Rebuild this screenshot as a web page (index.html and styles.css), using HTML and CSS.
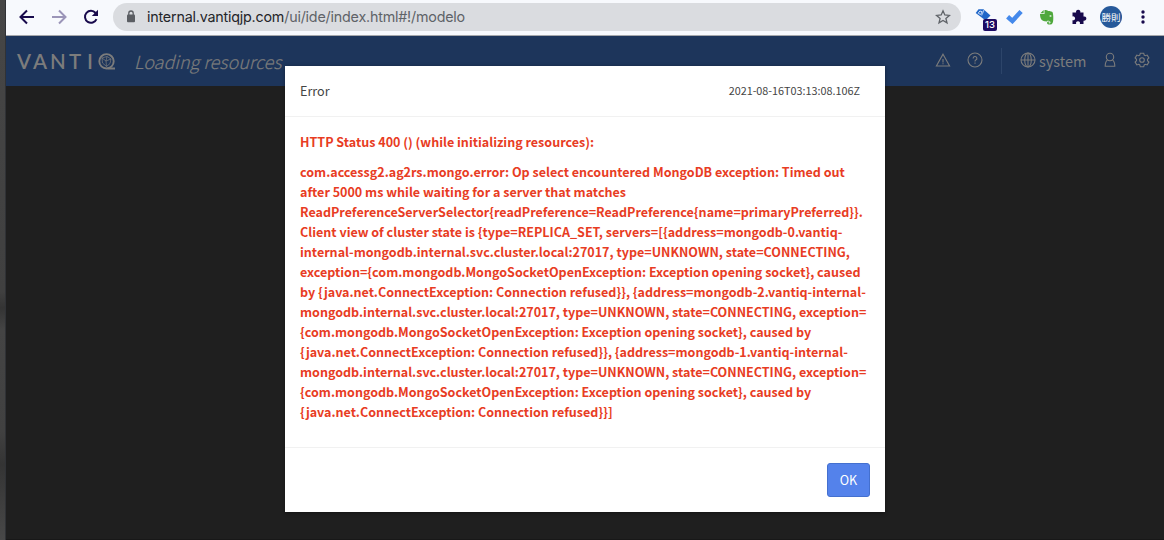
FILE: index.html
```html
<!DOCTYPE html>
<html lang="ja">
<head>
<meta charset="utf-8">
<title>VANTIQ</title>
<link rel="stylesheet" href="styles.css">
</head>
<body>
<div class="window">
  <div class="toolbar">
    <svg class="nav back" viewBox="0 0 16 16"><path d="M15 8H2M8 1.500L1.500 8L8 14.500"/></svg>
    <svg class="nav forward" viewBox="0 0 16 16"><path d="M1 8H14M8 1.500L14.500 8L8 14.500"/></svg>
    <svg class="nav reload" viewBox="0 0 16 16"><path d="M13.500 10.200A6 6 0 1 1 12.600 4"/><path class="solid" d="M15 .8V7H8.800Z"/></svg>
    <div class="address">
      <svg class="lock" viewBox="0 0 10 13"><rect x="1" y="4.500" width="8" height="7.800" rx="1"/><path d="M2.800 5V3.200a2.200 2.200 0 0 1 4.400 0V5"/></svg>
      <span class="url">internal.vantiqjp.com<span class="path">/ui/ide/index.html#!/modelo</span></span>
      <svg class="star" viewBox="0 0 16 16"><path d="M8 1.800L9.800 6l4.600.4-3.500 3 1.100 4.500L8 11.500l-4 2.400 1.100-4.500-3.500-3L6.200 6Z"/></svg>
    </div>
    <div class="tag">
      <svg viewBox="0 0 16 14"><path fill="#1f66c8" d="M3.500 1.200H8.500L15.500 7.500L11 12L8 10.500L.7 5Z"/><path d="M3.200 5.200l1.700-2.200 2.300.8L5.500 6.500Z" fill="none" stroke="#cfe0f7" stroke-width="1"/><path d="M9 2l-2.500 5.500" stroke="#9fc0ee" stroke-width="1.200" fill="none"/></svg>
      <span class="badge">13</span>
    </div>
    <svg class="check" viewBox="0 0 16 14"><path d="M1.500 7.200L6 11.200L14.200 2.300" fill="none" stroke="#4489eb" stroke-width="4.200"/></svg>
    <svg class="elephant" viewBox="0 0 16 16"><path d="M4.700 1v3.200H1.300Z"/><path d="M5.500 1c2 .0 2.800.1 3.600.9 2 .1 4.200.4 4.600 1.500.6 2 .8 5 .5 8-.2 2-.8 4-2.800 4H9.500c-1.700 0-2-2.800-.2-2.900h1.200v1.100H9.700c-.4.5 0 .8.500.8 1 0 1.400-.5 1.300-1.300-.2-1.200-1.900-1.200-2.800-1.600-.4 1-1.600 1.100-3.100.8C2.700 11.800 1 9.500 1 5h4.500Z"/><ellipse cx="11.500" cy="7" rx="1.100" ry=".8" fill="#f7f9fd"/></svg>
    <svg class="puzzle" viewBox="0 0 16 16"><path d="M1.500 3.500h3.600a2.200 2.200 0 1 1 4.200 0h3.200v4a2.200 2.200 0 1 1 0 4.200V15H8.800a2 2 0 1 0-3.600 0H1.500v-3.800a2 2 0 1 0 0-3.800Z"/></svg>
    <span class="avatar">勝則</span>
    <svg class="kebab" viewBox="0 0 4 14"><circle cx="2" cy="2" r="1.700"/><circle cx="2" cy="7" r="1.700"/><circle cx="2" cy="12" r="1.700"/></svg>
  </div>
  <div class="navbar">
    <div class="logo"><span>V</span><span>A</span><span>N</span><span>T</span><span>I</span></div>
    <svg class="logo-q" viewBox="0 0 18 17"><circle cx="8.500" cy="8.300" r="7.200" stroke-width="1.900"/><path stroke-width=".7" d="M4 5l5-1.500L13 6l-1 4.500-3.500 3L4.500 10ZM4 5l4 3 5-2M8 8l.5 5.500M8 8l1-4.500"/><path stroke-width="2" d="M9.500 15.500H17"/></svg>
    <div class="loading">Loading resources</div>
    <svg class="ico warning" viewBox="0 0 16 16"><path d="M8 2.200L14.600 14H1.400ZM8 7v3.500M8 11.300v1"/></svg>
    <svg class="ico help" viewBox="0 0 16 16"><circle cx="8" cy="8" r="7"/><path d="M6.100 6.400A1.900 1.900 0 1 1 8.800 8.100Q8 8.500 8 9.500M8 10.600v1.200"/></svg>
    <span class="divider"></span>
    <svg class="ico globe" viewBox="0 0 16 16"><circle cx="8" cy="8" r="7"/><ellipse cx="8" cy="8" rx="3.300" ry="7"/><path d="M8 1v14M1 8h14"/></svg>
    <span class="namespace">system</span>
    <svg class="ico user" viewBox="0 0 16 16"><circle cx="8" cy="5" r="3.700"/><path d="M5.700 7.900C4 8.900 3.200 10.800 3.200 14.300h9.600C12.800 10.800 12 8.900 10.300 7.900"/></svg>
    <svg class="ico gear" viewBox="0 0 16 16"><circle cx="8" cy="8" r="2.300"/><path d="M6.300 1.200h3.400l.5 1.900 1.100.6 1.900-.6 1.700 2.900-1.400 1.300v1.400l1.400 1.300-1.700 2.900-1.900-.6-1.100.6-.5 1.900H6.300l-.5-1.900-1.100-.6-1.900.6L1.100 10l1.400-1.300V7.300L1.100 6l1.700-2.900 1.900.6 1.100-.6Z"/></svg>
  </div>
  <div class="workspace"></div>
</div>
<div class="modal">
  <div class="modal-header"><span>Error</span><span class="timestamp">2021-08-16T03:13:08.106Z</span></div>
  <div class="modal-body">
    <p>HTTP Status 400 () (while initializing resources):</p>
    <p>com.accessg2.ag2rs.mongo.error: Op select encountered MongoDB exception: Timed out<br>after 5000 ms while waiting for a server that matches<br>ReadPreferenceServerSelector{readPreference=ReadPreference{name=primaryPreferred}}.<br>Client view of cluster state is {type=REPLICA_SET, servers=[{address=mongodb-0.vantiq-<br>internal-mongodb.internal.svc.cluster.local:27017, type=UNKNOWN, state=CONNECTING,<br>exception={com.mongodb.MongoSocketOpenException: Exception opening socket}, caused<br>by {java.net.ConnectException: Connection refused}}, {address=mongodb-2.vantiq-internal-<br>mongodb.internal.svc.cluster.local:27017, type=UNKNOWN, state=CONNECTING, exception=<br>{com.mongodb.MongoSocketOpenException: Exception opening socket}, caused by<br>{java.net.ConnectException: Connection refused}}, {address=mongodb-1.vantiq-internal-<br>mongodb.internal.svc.cluster.local:27017, type=UNKNOWN, state=CONNECTING, exception=<br>{com.mongodb.MongoSocketOpenException: Exception opening socket}, caused by<br>{java.net.ConnectException: Connection refused}}]</p>
  </div>
  <div class="modal-footer"><button class="ok">OK</button></div>
</div>
</body>
</html>
```

FILE: styles.css
```css
* { box-sizing: border-box; }
body {
  margin: 0;
  width: 1164px;
  height: 540px;
  overflow: hidden;
  position: relative;
  padding-left: 5px;
  background: linear-gradient(#464646, #404040 54%, #343434 57%, #444 61%, #414141 80%, #343434 86%, #484848);
  font-family: "Noto Sans CJK JP", sans-serif;
}
svg { display: block; flex: none; }
.window { height: 540px; display: flex; flex-direction: column; border-left: 1px solid #303236; }
.toolbar {
  height: 36px;
  flex: none;
  display: flex;
  align-items: center;
  padding: 0 0 2px 13px;
  background: #f7f9fd;
  border-bottom: 1px solid #a5a7ab;
}
.nav { width: 16px; height: 16px; fill: none; stroke: #180a4c; stroke-width: 2; margin-right: 16px; }
.forward { stroke: #9b95b8; }
.reload .solid { fill: #180a4c; stroke: none; }
.reload { margin-right: 14px; }
.address {
  width: 848px;
  height: 28px;
  border-radius: 14px;
  background: #dadce0;
  display: flex;
  align-items: center;
  padding: 0 10px 0 13px;
}
.lock { width: 10px; height: 13px; fill: #5b5e63; margin-right: 11px; }
.lock path { fill: none; stroke: #5b5e63; stroke-width: 1.3; }
.url { font: 14.3px/20px Inter, sans-serif; letter-spacing: -.2px; color: #242529; white-space: nowrap; flex: 1; }
.path { color: #5f6368; }
.star { width: 16px; height: 16px; fill: none; stroke: #5f6368; stroke-width: 1.3; }
.tag { position: relative; width: 21px; height: 24px; margin-left: 14px; padding-top: 3px; }
.tag svg { width: 16px; height: 14px; }
.badge {
  position: absolute;
  left: 8px;
  top: 14px;
  width: 14px;
  height: 12px;
  border-radius: 2px;
  background: #1d0b63;
  color: #fff;
  font: 500 9.500px/12px Inter, sans-serif;
  text-align: center;
}
.check { width: 17px; height: 15px; margin-left: 10px; }
.elephant { width: 16px; height: 16px; margin-left: 16px; fill: #4fa83d; }
.puzzle { width: 16px; height: 16px; margin-left: 16px; fill: #180a4c; }
.avatar {
  width: 22px;
  height: 22px;
  border-radius: 50%;
  margin-left: 13px;
  background: #26599a;
  color: #fff;
  font-size: 9.500px;
  line-height: 22px;
  text-align: center;
}
.kebab { width: 4px; height: 14px; margin-left: 19px; fill: #180a4c; }
.navbar {
  height: 50px;
  flex: none;
  display: flex;
  align-items: center;
  padding-left: 11px;
  background: #1d355b;
  color: #7c7c7c;
}
.logo { display: grid; grid-template-columns: 16px 17px 19px 18px 11px; font: 600 20.500px/24px Lato, sans-serif; }
.logo-q { width: 18px; height: 17px; fill: none; stroke: #7c7c7c; }
.loading { font-size: 18px; line-height: 24px; font-style: italic; font-weight: 300; margin-left: 18px; width: 801px; white-space: nowrap; -webkit-text-stroke: .2px; }
.ico { width: 16px; height: 16px; margin-bottom: 2px; fill: none; stroke: #7c7c7c; stroke-width: 1.1; }
.help { margin-left: 16px; }
.divider { width: 1px; height: 26px; margin: 0 18px; background: #2d456a; }
.namespace { width: 48px; margin-left: 3px; font-size: 14.500px; line-height: 20px; }
.user { margin-left: 15px; }
.gear { margin-left: 16px; }
.workspace { flex: 1; background: #1f1f1f; border-bottom: 1px solid #181818; }
.modal {
  position: absolute;
  left: 285px;
  top: 66px;
  width: 600px;
  height: 446px;
  background: #fff;
  display: flex;
  flex-direction: column;
  box-shadow: 0 1px 4px rgba(0, 0, 0, .4);
}
.modal-header {
  height: 51px;
  flex: none;
  display: flex;
  align-items: center;
  justify-content: space-between;
  padding: 0 25px 0 15px;
  border-bottom: 1px solid #f1f1f1;
  font-size: 12.600px;
  line-height: 20px;
  color: #444;
}
.timestamp { font-size: 10.800px; padding-bottom: 3px; }
.modal-body {
  flex: 1;
  padding: 15px;
  color: #e83c23;
  font-size: 12.540px;
  line-height: 20px;
  font-weight: bold;
  white-space: nowrap;
}
.modal-body p { margin: 0 0 10px; }
.modal-footer {
  height: 65px;
  flex: none;
  border-top: 1px solid #f1f1f1;
  padding: 15px;
  display: flex;
  justify-content: flex-end;
}
.ok {
  width: 43px;
  height: 34px;
  padding: 0;
  border: 1px solid #4470cf;
  border-radius: 3px;
  background: #5482eb;
  color: #fff;
  font: 12.600px/20px "Noto Sans CJK JP", sans-serif;
}
```
